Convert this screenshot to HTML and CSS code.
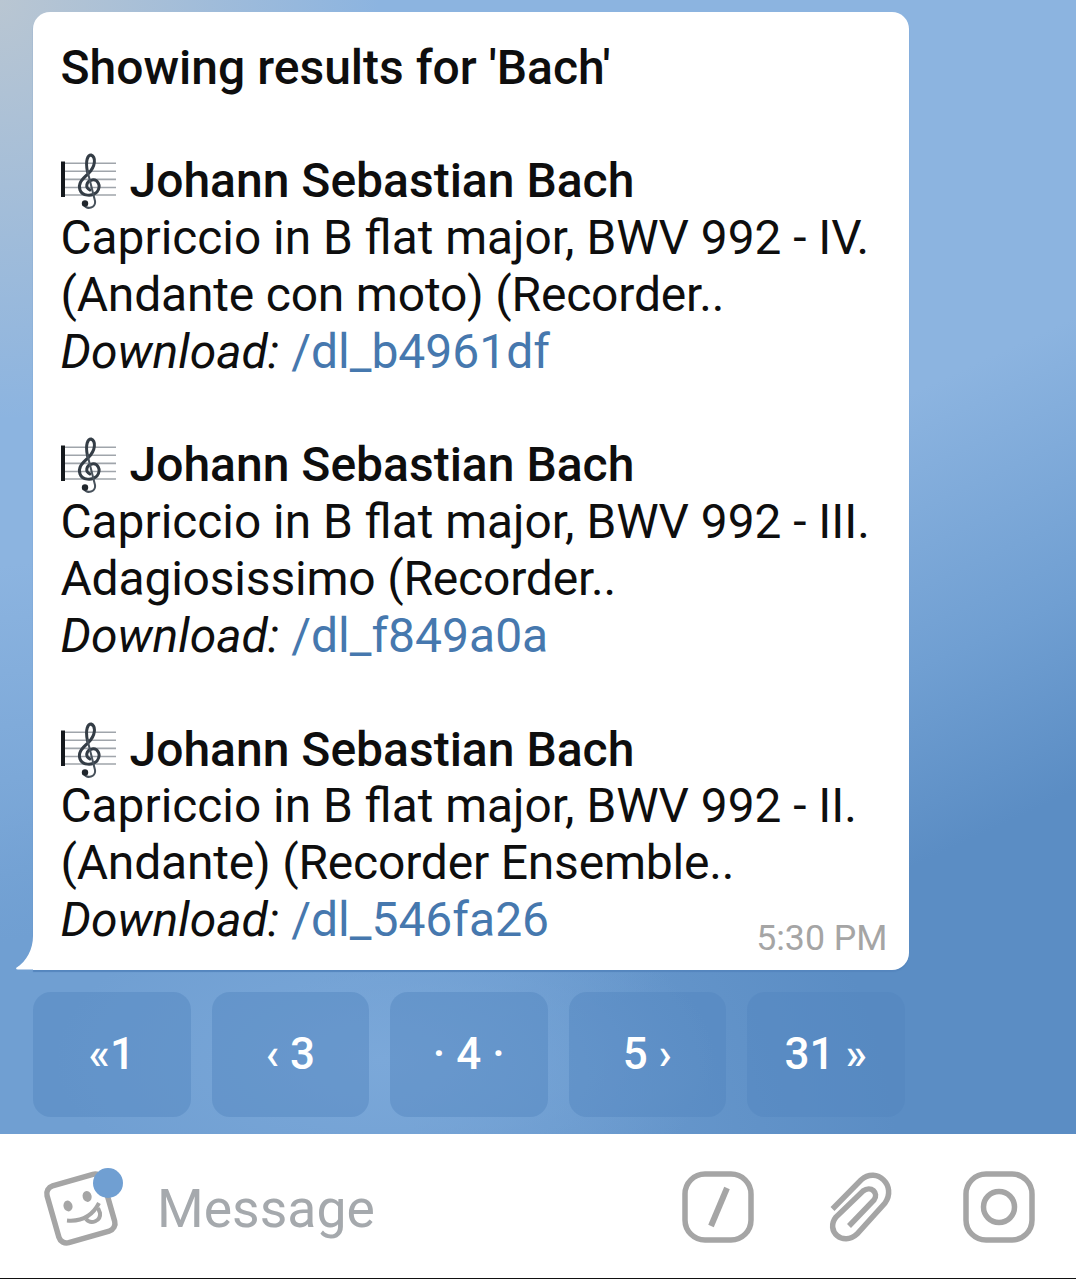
FILE: index.html
```html
<!DOCTYPE html>
<html lang="en">
<head>
<meta charset="utf-8">
<title>Chat</title>
<link rel="stylesheet" href="styles.css">
</head>
<body>
<svg class="defs" aria-hidden="true">
  <symbol id="score" viewBox="0 0 57 58">
    <path d="M3 11.2H55M3 19.2H55M3 27.4H55M3 35.5H55M3 43H55" stroke="#a0a5ab" stroke-width="1.6" fill="none"/>
    <path d="M2 9.500V45" stroke="#15191d" stroke-width="4" fill="none"/>
    <g fill="none" stroke-linecap="round">
      <path d="M26.500 20C24 8 27 3 30 3C35 5 35 14 27 22C20 28 17 32 19 38C21 44 31 45 36 40C41 33 36 27 31 28C25 29 24 36 29 38" stroke="#343d46" stroke-width="3"/>
      <path d="M26.500 19L34 49C35 56 26 58 23 53" stroke="#48525c" stroke-width="2"/>
    </g>
    <circle cx="24" cy="51.500" r="3.200" fill="#20262c"/>
  </symbol>
</svg>
<main class="chat">
  <div class="bubble">
    <svg class="tail" viewBox="0 0 18 34"><path d="M18 0H17C17 13 11 25 0 32Q0 33.500 2 33.500H18Z" fill="#fff"/></svg>
    <p class="line"><b>Showing results for 'Bach'</b></p>
    <div class="entry">
      <p class="line"><svg class="score"><use href="#score"/></svg><b>Johann Sebastian Bach</b></p>
      <p class="line title">Capriccio in B flat major, BWV 992 - IV.</p>
      <p class="line subtitle">(Andante con moto) (Recorder..</p>
      <p class="line"><i>Download:</i> <a>/dl_b4961df</a></p>
    </div>
    <div class="entry">
      <p class="line"><svg class="score"><use href="#score"/></svg><b>Johann Sebastian Bach</b></p>
      <p class="line title">Capriccio in B flat major, BWV 992 - III.</p>
      <p class="line subtitle">Adagiosissimo (Recorder..</p>
      <p class="line"><i>Download:</i> <a>/dl_f849a0a</a></p>
    </div>
    <div class="entry">
      <p class="line"><svg class="score"><use href="#score"/></svg><b>Johann Sebastian Bach</b></p>
      <p class="line title">Capriccio in B flat major, BWV 992 - II.</p>
      <p class="line subtitle">(Andante) (Recorder Ensemble..</p>
      <p class="line"><i>Download:</i> <a>/dl_546fa26</a></p>
    </div>
    <time class="time">5:30 PM</time>
  </div>
  <div class="pager">
    <button>«1</button>
    <button>‹ 3</button>
    <button>· 4 ·</button>
    <button>5 ›</button>
    <button>31 »</button>
  </div>
</main>
<footer class="composer">
  <svg class="sticker" viewBox="0 0 84 84">
    <g fill="none" stroke="#a5a5a5" stroke-width="5.500">
      <rect x="11" y="14" width="58" height="59" rx="8" transform="rotate(-16 40 44)"/>
      <path d="M26 55.500Q48 57.500 58 38" stroke-width="4"/>
      <path d="M45 54C50 60 60 56 59 48L57 43" stroke-width="4"/>
    </g>
    <ellipse cx="27" cy="41" rx="4.500" ry="5.500" fill="#a5a5a5" transform="rotate(-16 27 41)"/>
    <ellipse cx="46" cy="31.500" rx="4.500" ry="5.500" fill="#a5a5a5" transform="rotate(-16 46 31)"/>
    <circle cx="67" cy="18" r="15" fill="#709fd2"/>
  </svg>
  <span class="placeholder">Message</span>
  <svg class="command" viewBox="0 0 72 72"><g fill="none" stroke="#a5a5a5">
    <rect x="3" y="3" width="66" height="66" rx="20" stroke-width="5.500"/><path d="M45 17L29 55" stroke-width="6"/></g></svg>
  <svg class="clip" viewBox="0 0 66 72"><path d="M4.500 38L33 9C49 -5 69 15 57 32L29 63C15 76 -3 60 8 46L35 20C43 14 51 22 46 29L21 55" fill="none" stroke="#a5a5a5" stroke-width="5.500"/></svg>
  <svg class="camera" viewBox="0 0 72 72"><g fill="none" stroke="#a5a5a5" stroke-width="5.500">
    <rect x="3" y="3" width="66" height="66" rx="20"/><circle cx="36" cy="36" r="15.500"/></g></svg>
</footer>
</body>
</html>
```
FILE: styles.css
```css
* { box-sizing: border-box; }
body {
  margin: 0;
  width: 1076px;
  height: 1279px;
  display: flex;
  flex-direction: column;
  font-family: Roboto, sans-serif;
  color: #0e0e0e;
  overflow: hidden;
}
.defs { position: absolute; width: 0; height: 0; }
.chat {
  height: 1134px;
  padding: 12px 0 0 33px;
  background:
    radial-gradient(ellipse 380px 420px at 0 0, #b9c6d2 0, #8cb4e000 100%),
    radial-gradient(ellipse 330px 160px at 385px 1060px, #7ba8d9 0, #709fd200 100%),
    radial-gradient(ellipse 800px 620px at 100px 1180px, #709fd2 40%, #709fd200 100%),
    linear-gradient(155deg, #8cb4e0 0, #8cb4e0 50%, #709fd2 67%, #5b8dc4 79%, #5b8dc4 100%);
}
.bubble {
  position: relative;
  width: 875.500px;
  height: 957.500px;
  padding: 27.500px 28px 0 27.500px;
  background: #fff;
  border-radius: 17px 17px 17px 0;
  box-shadow: 0 2px 1px #5586be;
}
.tail { position: absolute; left: -17px; bottom: 0; width: 18px; height: 34px; }
.line {
  margin: 0;
  height: 56.850px;
  line-height: 56.850px;
  font-size: 48px;
  white-space: nowrap;
}
.line b { font-weight: 500; }
.line a { color: #4678ae; }
.title { font-size: 47.800px; }
.subtitle { letter-spacing: -0.2px; }
.entry { margin-top: 56.850px; }
.score { width: 57px; height: 58px; margin-right: 12px; position: relative; top: -1px; }
.entry .line:first-child { display: flex; }
.time { position: absolute; right: 21px; bottom: 10px; font-size: 35.700px; line-height: 43px; color: #a5a5a5; }
.pager { display: flex; gap: 21px; margin-top: 22px; }
.pager button {
  width: 157.500px;
  height: 125px;
  padding: 0;
  border: 0;
  border-radius: 18px;
  background: #5284be73;
  color: #fff;
  font: 500 44px Roboto, sans-serif;
}
.composer {
  flex: 1;
  display: flex;
  align-items: center;
  padding: 1px 41px 0 41px;
  background: #fff;
  border-bottom: 1px solid #111;
}
.sticker { width: 84px; height: 84px; }
.placeholder { margin: 4px 0 0 32px; font-size: 53.500px; line-height: 60px; color: #a5a9ad; flex: 1; }
.command, .camera { width: 72px; height: 72px; }
.clip { width: 66px; height: 72px; margin: 0 69px 0 74px; }
```
